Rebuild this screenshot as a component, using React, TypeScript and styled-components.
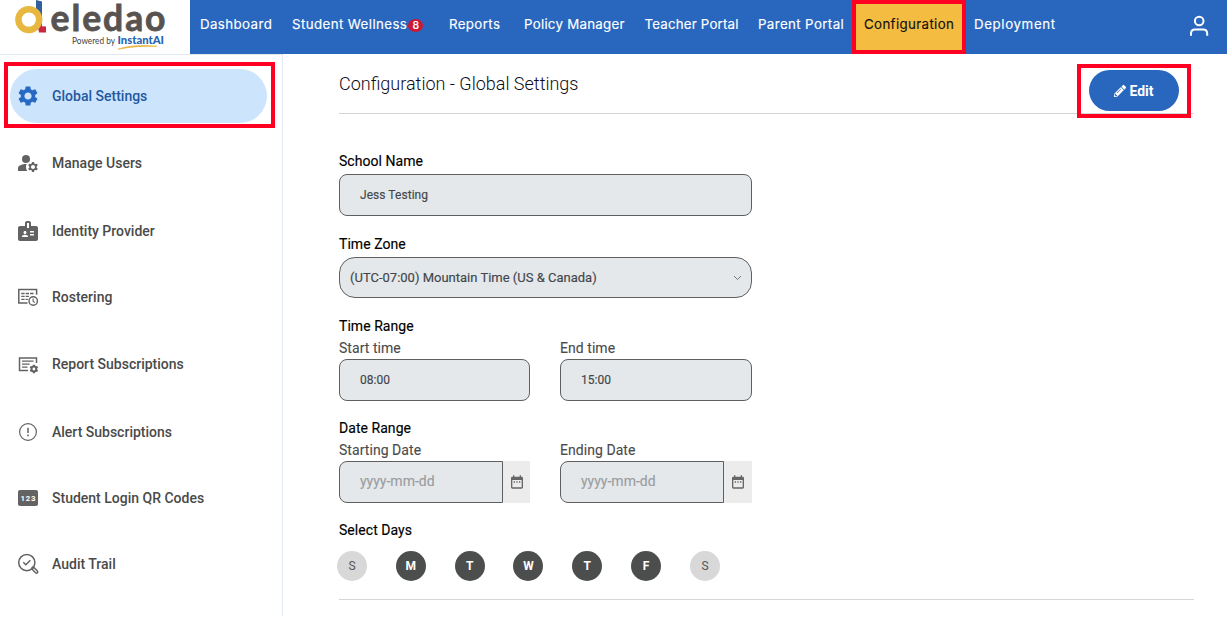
import React from 'react';
import styled, { createGlobalStyle, css } from 'styled-components';
import { MdSettings, MdManageAccounts, MdBadge, MdDateRange } from 'react-icons/md';
import { FaPencilAlt } from 'react-icons/fa';

const GlobalStyle = createGlobalStyle`
  * { box-sizing: border-box; }
  body { margin: 0; background: #fff; font-family: Roboto, sans-serif; overflow: hidden; }
`;

const Page = styled.div`
  height: 617px;
  display: flex;
  flex-direction: column;
`;

const TopBar = styled.header`
  height: 54px;
  flex: none;
  display: flex;
  background: #2966bd;
`;

const LogoArea = styled.div`
  width: 190px;
  height: 54px;
  background: #fff;
`;

const Nav = styled.nav`
  flex: 1;
  display: flex;
`;

const NavItem = styled.a<{ $width: number; $spacing: number; $active?: boolean }>`
  position: relative;
  width: ${p => p.$width}px;
  height: 54px;
  padding: 0 0 6px 10px;
  display: flex;
  align-items: center;
  white-space: nowrap;
  font-family: Inter, sans-serif;
  font-size: 13.3px;
  font-weight: 400;
  letter-spacing: ${p => p.$spacing}px;
  color: ${p => (p.$active ? '#111' : '#fff')};
  background: ${p => (p.$active ? '#f4bd42' : 'transparent')};
  -webkit-text-stroke: 0.15px currentColor;
`;

const CountBadge = styled.span`
  width: 15px;
  height: 13px;
  margin: 2px 0 0 1px;
  border-radius: 50%;
  display: flex;
  align-items: center;
  justify-content: center;
  background: #cf1733;
  font-size: 10.5px;
  font-weight: 500;
  letter-spacing: 0;
`;

const UserButton = styled.div`
  width: 57px;
  display: flex;
  justify-content: center;
  padding-top: 15px;
`;

const Highlight = styled.span<{ $x: number; $y: number }>`
  position: absolute;
  inset: ${p => -p.$y}px ${p => -p.$x}px;
  border: 4px solid #ff0022;
  z-index: 2;
  pointer-events: none;
`;

const Body = styled.div`
  flex: 1;
  display: flex;
`;

const Sidebar = styled.aside`
  width: 283px;
  height: 562px;
  padding: 14px 15px 0 10px;
  border-top: 1px solid #e2e8ef;
  border-right: 1px solid #e2e8ef;
`;

const SideItem = styled.div<{ $gap: number; $active?: boolean }>`
  position: relative;
  height: 54px;
  margin-bottom: ${p => p.$gap}px;
  padding-left: 6px;
  border-radius: 27px;
  display: flex;
  align-items: center;
  gap: 12px;
  font-size: 14px;
  font-weight: 500;
  color: ${p => (p.$active ? '#2458a0' : '#4a4a4a')};
  background: ${p => (p.$active ? '#cde4fd' : 'transparent')};
  svg { flex: none; color: ${p => (p.$active ? '#2869c4' : '#636363')}; }
`;

const SideHighlight = styled(Highlight)`
  inset: -7px -8px -5px -6px;
`;

const Main = styled.main`
  flex: 1;
  padding: 0 33px 0 56px;
`;

const TitleRow = styled.div`
  height: 60px;
  display: flex;
  justify-content: space-between;
  align-items: center;
  padding-right: 15px;
  border-bottom: 1px solid #d6d6d6;
`;

const Title = styled.h1`
  margin: 0;
  font-size: 18px;
  font-weight: 300;
  color: #0d0d1c;
`;

const EditButton = styled.button`
  position: relative;
  width: 90px;
  height: 41px;
  margin-top: 14px;
  border: 0;
  border-radius: 21px;
  padding: 0;
  display: flex;
  align-items: center;
  justify-content: center;
  gap: 3px;
  background: #2966bd;
  color: #fff;
  font: 700 14px Roboto, sans-serif;
`;

const EditHighlight = styled(Highlight)`
  inset: -6px -12px -7px -12px;
`;

const Form = styled.div`
  padding-top: 36px;
  height: 486px;
  border-bottom: 1px solid #d6d6d6;
`;

const Section = styled.section<{ $space: number }>`
  width: 413px;
  margin-bottom: ${p => p.$space}px;
`;

const Label = styled.div<{ $gap?: number }>`
  height: 22px;
  line-height: 22px;
  margin-bottom: ${p => p.$gap ?? 0}px;
  font-size: 14px;
  letter-spacing: 0.05px;
  color: #000;
  -webkit-text-stroke: 0.15px currentColor;
`;

const SubLabel = styled.div`
  height: 22px;
  line-height: 22px;
  font-size: 14px;
  letter-spacing: 0.05px;
  color: #4a4a4a;
  -webkit-text-stroke: 0.1px currentColor;
`;

const fieldBox = css`
  display: flex;
  align-items: center;
  border: 1px solid #5f5f5f;
  background: #e4e8eb;
  color: #42464a;
  -webkit-text-stroke: 0.15px currentColor;
`;

const Field = styled.div`
  ${fieldBox}
  height: 42px;
  padding-left: 20px;
  border-radius: 8px;
  font-size: 12px;
  letter-spacing: 0.05px;
`;

const SelectField = styled.div`
  ${fieldBox}
  height: 41px;
  padding: 0 9px 0 10px;
  justify-content: space-between;
  border-radius: 16px;
  font-size: 13px;
`;

const Columns = styled.div`
  display: grid;
  grid-template-columns: 191px 192px;
  column-gap: 30px;
`;

const DateRow = styled.div`
  display: flex;
  height: 42px;
`;

const DateField = styled.div`
  ${fieldBox}
  width: 164px;
  padding: 0 0 2px 20px;
  border-radius: 8px 0 0 8px;
  font-size: 14px;
  color: #9b9d9f;
`;

const DateButton = styled.div`
  flex: 1;
  display: flex;
  align-items: center;
  justify-content: center;
  background: #ececec;
  color: #666;
`;

const Days = styled.div`
  width: 383px;
  margin: 10px 0 0 -2px;
  display: flex;
  justify-content: space-between;
`;

const Day = styled.div<{ $on: boolean }>`
  width: 30px;
  height: 30px;
  border-radius: 50%;
  display: flex;
  align-items: center;
  justify-content: center;
  font-size: 12px;
  font-weight: ${p => (p.$on ? 700 : 400)};
  color: ${p => (p.$on ? '#fff' : '#555')};
  background: ${p => (p.$on ? '#4c4e4d' : '#d8d8d8')};
`;

const Logo = () => (
  <svg width="190" height="54" viewBox="0 0 190 54">
    <path d="M36 0l6 1.5v28h-6z" fill="#2f5f9f" />
    <path d="M38 26l8 .5v6h-7z" fill="#cf2440" />
    <circle cx="28.8" cy="19.6" r="10.4" fill="#fff" stroke="#e8b73f" strokeWidth="6.5" />
    <text x="50.5" y="31.3" fontFamily="Lato, sans-serif" fontWeight="700" fontSize="35.5" fill="#585351" stroke="#585351" strokeWidth=".8" textLength="115" lengthAdjust="spacing">eledao</text>
    <text x="72" y="43.6" fontFamily="Lato, sans-serif" fontSize="9" fill="#444" textLength="43" lengthAdjust="spacingAndGlyphs">Powered by</text>
    <text x="117.5" y="43.8" fontFamily="Lato, sans-serif" fontWeight="900" fontSize="10.5" fill="#2763b2" textLength="46.5" lengthAdjust="spacingAndGlyphs">InstantAI</text>
    <path d="M118 49.3C128 45.5 142 44.8 157 46.3C143 46 130 46.7 118 49.3Z" fill="#e8b440" stroke="#e8b440" strokeWidth=".7" />
  </svg>
);

const UserIcon = () => (
  <svg width="20" height="22" viewBox="0 0 20 22" fill="none" stroke="#fff" strokeWidth="2">
    <circle cx="10.2" cy="6" r="4.3" />
    <path d="M2 20.7v-2.2c0-2.6 1.7-4 4.2-4h7.8c2.5 0 4.2 1.4 4.2 4v2.2" />
  </svg>
);

const RosterIcon = () => (
  <svg width="24" height="24" viewBox="0 0 24 24" fill="none" stroke="currentColor" strokeWidth="1.5">
    <path d="M11.5 18H2.8V4.5h17.8v5.3" />
    <path d="M5.2 8.5h3.4M9.6 8.5h3.4M14 8.5h3.6M5.2 11.4h3.4M9.6 11.4h3.4M5.2 14.3h3.4M9.6 14.3h2.2" strokeWidth="1.3" />
    <circle cx="17.2" cy="16" r="4.2" strokeWidth="1.4" />
    <path d="M17.1 13.6v2.6l1.7 1.4" strokeWidth="1.1" />
  </svg>
);

const ReportIcon = () => (
  <svg width="24" height="24" viewBox="0 0 24 24" fill="none" stroke="currentColor" strokeWidth="1.5">
    <path d="M12 18.6H3.5V5.9h17v5" />
    <path d="M6 9.2h11.5M6 12.2h7.5M6 15.2h5.5" strokeWidth="1.3" />
    <circle cx="17.9" cy="17" r="2.4" strokeWidth="2" />
    <path d="M17.9 12.7v1.6M17.9 19.7v1.6M14.2 14.85l1.4.8M20.2 18.35l1.4.8M14.2 19.15l1.4-.8M20.2 15.65l1.4-.8" strokeWidth="2" />
  </svg>
);

const AlertIcon = () => (
  <svg width="24" height="24" viewBox="0 0 24 24" fill="none" stroke="currentColor">
    <circle cx="12" cy="12" r="8.4" strokeWidth="1.2" />
    <path d="M12 7.8v5.2M12 14.6v1.6" strokeWidth="1.5" />
  </svg>
);

const NumbersIcon = () => (
  <svg width="24" height="24" viewBox="0 0 24 24">
    <rect x="2" y="4" width="20" height="16" rx="2" fill="currentColor" />
    <text x="12.3" y="14.8" textAnchor="middle" fontFamily="Roboto, sans-serif" fontWeight="700" fontSize="7.8" letterSpacing=".7" fill="#fff">123</text>
  </svg>
);

const AuditIcon = () => (
  <svg width="24" height="24" viewBox="0 0 24 24" fill="none" stroke="currentColor" strokeWidth="1.5">
    <circle cx="10.8" cy="10.6" r="8.1" />
    <path d="M7.3 10.3l2.5 2.5 4.6-4.5" />
    <path d="M17 16.4l3.5 3.5" strokeWidth="4" strokeLinecap="round" />
    <path d="M17.8 17.2l2.6 2.6" stroke="#fff" strokeWidth="1.1" strokeLinecap="round" />
  </svg>
);

const Chevron = () => (
  <svg width="9" height="6" viewBox="0 0 9 6" fill="none" stroke="#777" strokeWidth="1">
    <path d="M1 1l3.5 3.5L8 1" />
  </svg>
);

const navItems = [
  { label: 'Dashboard', width: 92, spacing: 0.4 },
  { label: 'Student Wellness', width: 157, spacing: 0.4, badge: 8 },
  { label: 'Reports', width: 75, spacing: 0.37 },
  { label: 'Policy Manager', width: 120.5, spacing: 0.26 },
  { label: 'Teacher Portal', width: 113.5, spacing: 0.18 },
  { label: 'Parent Portal', width: 106, spacing: 0.38 },
  { label: 'Configuration', width: 110, spacing: 0.36, active: true },
  { label: 'Deployment', width: 100, spacing: 0.62 },
];

const sideItems = [
  { label: 'Global Settings', icon: <MdSettings size={24} />, gap: 13, active: true },
  { label: 'Manage Users', icon: <MdManageAccounts size={24} />, gap: 14 },
  { label: 'Identity Provider', icon: <MdBadge size={24} />, gap: 12 },
  { label: 'Rostering', icon: <RosterIcon />, gap: 13 },
  { label: 'Report Subscriptions', icon: <ReportIcon />, gap: 14 },
  { label: 'Alert Subscriptions', icon: <AlertIcon />, gap: 12 },
  { label: 'Student Login QR Codes', icon: <NumbersIcon />, gap: 12 },
  { label: 'Audit Trail', icon: <AuditIcon />, gap: 0 },
];

const days = ['S', 'M', 'T', 'W', 'T', 'F', 'S'];

const DateInput = ({ label }: { label: string }) => (
  <div>
    <SubLabel>{label}</SubLabel>
    <DateRow>
      <DateField>yyyy-mm-dd</DateField>
      <DateButton><MdDateRange size={16} /></DateButton>
    </DateRow>
  </div>
);

export default function App() {
  return (
    <Page>
      <GlobalStyle />
      <TopBar>
        <LogoArea><Logo /></LogoArea>
        <Nav>
          {navItems.map(item => (
            <NavItem key={item.label} $width={item.width} $spacing={item.spacing} $active={item.active}>
              {item.label}
              {item.badge && <CountBadge>{item.badge}</CountBadge>}
              {item.active && <Highlight $x={2} $y={0} />}
            </NavItem>
          ))}
        </Nav>
        <UserButton><UserIcon /></UserButton>
      </TopBar>
      <Body>
        <Sidebar>
          {sideItems.map(item => (
            <SideItem key={item.label} $gap={item.gap} $active={item.active}>
              {item.icon}
              {item.label}
              {item.active && <SideHighlight $x={0} $y={0} />}
            </SideItem>
          ))}
        </Sidebar>
        <Main>
          <TitleRow>
            <Title>Configuration - Global Settings</Title>
            <EditButton>
              <FaPencilAlt size={12} />
              Edit
              <EditHighlight $x={0} $y={0} />
            </EditButton>
          </TitleRow>
          <Form>
            <Section $space={17}>
              <Label $gap={2}>School Name</Label>
              <Field>Jess Testing</Field>
            </Section>
            <Section $space={17}>
              <Label $gap={2}>Time Zone</Label>
              <SelectField>(UTC-07:00) Mountain Time (US &amp; Canada)<Chevron /></SelectField>
            </Section>
            <Section $space={16}>
              <Label>Time Range</Label>
              <Columns>
                <div><SubLabel>Start time</SubLabel><Field>08:00</Field></div>
                <div><SubLabel>End time</SubLabel><Field>15:00</Field></div>
              </Columns>
            </Section>
            <Section $space={16}>
              <Label>Date Range</Label>
              <Columns>
                <DateInput label="Starting Date" />
                <DateInput label="Ending Date" />
              </Columns>
            </Section>
            <Section $space={0}>
              <Label>Select Days</Label>
              <Days>
                {days.map((day, i) => <Day key={i} $on={i > 0 && i < 6}>{day}</Day>)}
              </Days>
            </Section>
          </Form>
        </Main>
      </Body>
    </Page>
  );
}
